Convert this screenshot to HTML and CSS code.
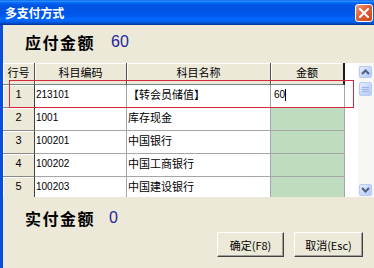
FILE: index.html
```html
<!DOCTYPE html>
<html lang="zh-CN">
<head>
<meta charset="utf-8">
<title>多支付方式</title>
<link rel="stylesheet" href="styles.css">
</head>
<body>
<div class="window">
  <div class="titlebar">
    <span class="title">多支付方式</span>
    <span class="close">
      <svg width="10" height="10" viewBox="0 0 10 10"><path d="M1 1 L9 9 M9 1 L1 9" stroke="#fff" stroke-width="2" stroke-linecap="square"/></svg>
    </span>
  </div>
  <div class="content">
    <div class="amount-row due">
      <span class="label">应付金额</span>
      <span class="value">60</span>
    </div>
    <div class="grid">
      <div class="sheet">
        <div class="hcell">行号</div>
        <div class="hcell">科目编码</div>
        <div class="hcell">科目名称</div>
        <div class="hcell last">金额</div>

        <div class="rcell">1</div>
        <div class="cell">213101</div>
        <div class="cell name">【转会员储值】</div>
        <div class="cell amt active"><span class="caret">60</span></div>

        <div class="rcell">2</div>
        <div class="cell">1001</div>
        <div class="cell name">库存现金</div>
        <div class="cell amt"></div>

        <div class="rcell">3</div>
        <div class="cell">100201</div>
        <div class="cell name">中国银行</div>
        <div class="cell amt"></div>

        <div class="rcell">4</div>
        <div class="cell">100202</div>
        <div class="cell name">中国工商银行</div>
        <div class="cell amt"></div>

        <div class="rcell">5</div>
        <div class="cell">100203</div>
        <div class="cell name">中国建设银行</div>
        <div class="cell amt"></div>
      </div>
      <div class="filler"></div>
      <div class="scrollbar">
        <div class="sbtn">
          <svg width="9" height="6" viewBox="0 0 9 6"><path d="M1 5 L4.5 1.5 L8 5" fill="none" stroke="#4d6185" stroke-width="2"/></svg>
        </div>
        <div class="thumb">
          <svg width="7" height="7" viewBox="0 0 7 7"><path d="M0 1.5H7M0 3.5H7M0 5.5H7" stroke="#9db3e6" stroke-width="1"/></svg>
        </div>
        <div class="track"></div>
        <div class="sbtn">
          <svg width="9" height="6" viewBox="0 0 9 6"><path d="M1 1 L4.5 4.5 L8 1" fill="none" stroke="#4d6185" stroke-width="2"/></svg>
        </div>
      </div>
      <div class="highlight"></div>
    </div>
    <div class="amount-row paid">
      <span class="label">实付金额</span>
      <span class="value">0</span>
    </div>
    <div class="buttons">
      <button class="btn ok">确定(F8)</button>
      <button class="btn cancel">取消(Esc)</button>
    </div>
  </div>
</div>
</body>
</html>
```

FILE: styles.css
```css
* { box-sizing: border-box; }
html, body { margin: 0; padding: 0; }
body {
  width: 374px;
  height: 268px;
  overflow: hidden;
  font-family: "Liberation Sans", "Noto Sans CJK SC", sans-serif;
  font-size: 11px;
  color: #000;
}
.window {
  width: 374px;
  height: 268px;
  display: flex;
  flex-direction: column;
  background: #ECE9D8;
}
.titlebar {
  height: 25px;
  flex: none;
  display: flex;
  align-items: center;
  justify-content: space-between;
  padding: 0 1px 0 5px;
  background: linear-gradient(to bottom, #0058EE 0%, #3593FF 4%, #288EFF 6%, #127DFF 8%, #036FFC 10%, #0262EE 14%, #0057E5 20%, #0054E3 24%, #0055EB 56%, #005BF5 66%, #026AFE 76%, #0062EF 86%, #0052D6 92%, #0040AB 96%, #003092 100%);
}
.title {
  color: #fff;
  font-family: "Noto Sans CJK SC", sans-serif;
  font-weight: 700;
  font-size: 12px;
  letter-spacing: -0.2px;
}
.close {
  width: 18px;
  height: 18px;
  border: 1px solid #fff;
  border-radius: 3px;
  background: linear-gradient(135deg, #f0a080 0%, #e0643c 40%, #c8461f 100%);
  display: flex;
  align-items: center;
  justify-content: center;
}
.content {
  flex: 1;
  display: flex;
  flex-direction: column;
  border-left: 3px solid #0a4fdc;
}
.amount-row {
  display: flex;
  align-items: center;
  gap: 16px;
  padding-left: 22px;
  flex: none;
}
.amount-row.due {
  height: 38px;
  padding-bottom: 4px;
}
.amount-row.paid {
  height: 35px;
  padding-top: 6px;
}
.label {
  font-family: "Noto Sans CJK SC", sans-serif;
  font-weight: 700;
  font-size: 16px;
  letter-spacing: 1.5px;
  line-height: 16px;
}
.value {
  font-family: "Liberation Sans", sans-serif;
  font-size: 16px;
  line-height: 16px;
  color: #1f24a0;
}
.paid .value { margin-left: -2px; }

.grid {
  position: relative;
  height: 134px;
  flex: none;
  display: flex;
  overflow: hidden;
  background: #fff;
}
.sheet {
  display: grid;
  grid-template-columns: 32px 92px 144px 74px;
  grid-template-rows: 22px repeat(5, 23px);
  flex: none;
}
.hcell {
  background: #ECE9D8;
  border-right: 1px solid #505050;
  border-bottom: 1px solid #808080;
  box-shadow: inset 1px 1px #fff;
  text-align: center;
  padding-top: 3px;
  font-family: "Noto Sans CJK SC", sans-serif;
  font-size: 11px;
  line-height: 13px;
}
.hcell.last { border-right: 2px solid #1a1a1a; }
.rcell {
  background: #ECE9D8;
  border-right: 1px solid #404040;
  border-bottom: 1px solid #8a8a8a;
  box-shadow: inset 1px 1px #fff;
  text-align: center;
  padding-top: 3px;
  font-size: 11px;
  line-height: 13px;
}
.cell {
  border-right: 1px solid #a6a6a6;
  border-bottom: 1px solid #a6a6a6;
  padding: 3px 1px 0 1px;
  white-space: nowrap;
  overflow: hidden;
  font-size: 10px;
  line-height: 13px;
}
.cell.name {
  font-family: "Noto Sans CJK SC", sans-serif;
  font-size: 11px;
  padding-top: 2px;
  line-height: 14px;
}
.cell.amt { background: #C0DCC0; }
.cell.amt.active { background: #fff; padding-left: 3px; }
.caret {
  display: inline-block;
  border-right: 1px solid #000;
  padding-right: 0;
  line-height: 12px;
}
.filler {
  flex: 1;
  background: #fff;
}
.scrollbar {
  width: 16px;
  flex: none;
  display: flex;
  flex-direction: column;
  padding: 3px 2px 1px 1px;
  gap: 4px;
  background: #f7f7f3;
}
.sbtn, .thumb {
  height: 12px;
  flex: none;
  border: 1px solid #b8cbf3;
  border-radius: 2px;
  background: linear-gradient(135deg, #e4ecfd 0%, #c6d6fa 60%, #b7cbf6 100%);
  display: flex;
  align-items: center;
  justify-content: center;
}
.thumb { height: 14px; margin-top: 0; }
.track { flex: 1; }
.highlight {
  position: absolute;
  left: 6px;
  top: 17px;
  width: 345px;
  height: 28px;
  border: 1px solid #d22a3a;
  pointer-events: none;
}

.buttons {
  display: flex;
  justify-content: flex-end;
  gap: 10px;
  padding-right: 11px;
  margin-top: 0;
  flex: none;
}
.btn {
  height: 25px;
  background: #ECE9D8;
  border: 1px solid;
  border-color: #fff #404040 #404040 #fff;
  box-shadow: inset -1px -1px #a0a0a0;
  font-family: "Noto Sans CJK SC", "Liberation Sans", sans-serif;
  font-size: 11px;
  color: #000;
  padding: 0;
}
.btn.ok { width: 67px; }
.btn.cancel { width: 69px; }
```
